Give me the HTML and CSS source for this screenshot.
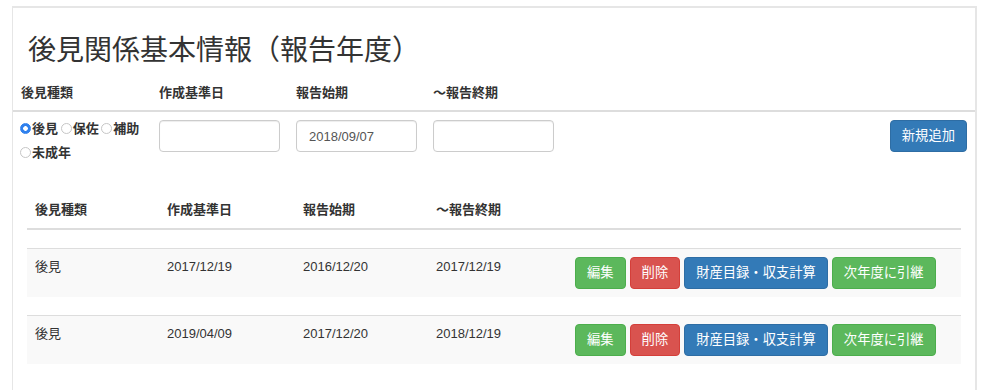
FILE: index.html
```html
<!DOCTYPE html>
<html lang="ja">
<head>
    <meta charset="UTF-8">
    <meta name="viewport" content="width=device-width, initial-scale=1.0">
    <title>後見関係基本情報（報告年度）</title>
    <link rel="stylesheet" href="styles.css">
</head>
<body>
    <div class="panel">
        <h2 class="panel-title">後見関係基本情報（報告年度）</h2>

        <div class="filter-labels">
            <div class="col">後見種類</div>
            <div class="col">作成基準日</div>
            <div class="col">報告始期</div>
            <div class="col">～報告終期</div>
        </div>

        <div class="filter-row">
            <div class="col radios">
                <label class="radio"><input type="radio" name="kind" checked>後見</label>
                <label class="radio"><input type="radio" name="kind">保佐</label>
                <label class="radio"><input type="radio" name="kind">補助</label>
                <label class="radio"><input type="radio" name="kind">未成年</label>
            </div>
            <div class="col"><input class="text-input" type="text"></div>
            <div class="col"><input class="text-input" type="text" value="2018/09/07"></div>
            <div class="col"><input class="text-input" type="text"></div>
            <div class="col col-action">
                <button class="btn btn-primary">新規追加</button>
            </div>
        </div>

        <div class="report-table">
            <div class="table-head">
                <div class="cell">後見種類</div>
                <div class="cell">作成基準日</div>
                <div class="cell">報告始期</div>
                <div class="cell">～報告終期</div>
                <div class="cell"></div>
            </div>

            <div class="table-spacer"></div>
            <div class="table-row">
                <div class="cell">後見</div>
                <div class="cell">2017/12/19</div>
                <div class="cell">2016/12/20</div>
                <div class="cell">2017/12/19</div>
                <div class="cell actions">
                    <button class="btn btn-success">編集</button>
                    <button class="btn btn-danger">削除</button>
                    <button class="btn btn-primary">財産目録・収支計算</button>
                    <button class="btn btn-success">次年度に引継</button>
                </div>
            </div>

            <div class="table-spacer"></div>
            <div class="table-row">
                <div class="cell">後見</div>
                <div class="cell">2019/04/09</div>
                <div class="cell">2017/12/20</div>
                <div class="cell">2018/12/19</div>
                <div class="cell actions">
                    <button class="btn btn-success">編集</button>
                    <button class="btn btn-danger">削除</button>
                    <button class="btn btn-primary">財産目録・収支計算</button>
                    <button class="btn btn-success">次年度に引継</button>
                </div>
            </div>
        </div>
    </div>
</body>
</html>
```

FILE: styles.css
```css
* {
    margin: 0;
    padding: 0;
    box-sizing: border-box;
}

body {
    font-family: "Liberation Sans", "Noto Sans CJK JP", sans-serif;
    font-size: 13px;
    line-height: 20px;
    color: #333;
    background-color: #fff;
}

.panel {
    width: 965px;
    margin: 6px 0 0 12px;
    border: 1px solid #e6e6e6;
    border-top-width: 2px;
    border-right-width: 2px;
    padding-bottom: 60px;
}

.panel-title {
    font-size: 28px;
    line-height: 30px;
    font-weight: 400;
    padding: 28px 0 0 15px;
}

/* search form */
.filter-labels,
.filter-row {
    display: grid;
    grid-template-columns: 138px 137px 137px 137px 1fr;
}

.filter-labels {
    margin-top: 17px;
    padding-bottom: 7px;
    border-bottom: 2px solid #ddd;
    font-weight: bold;
}

.col {
    padding: 0 8px;
}

.filter-row {
    padding-top: 8px;
    align-items: start;
}

.radios {
    margin-top: -3px;
    line-height: 24px;
    font-weight: bold;
}

.radio {
    display: inline-block;
    cursor: pointer;
}

.radio input {
    appearance: none;
    -webkit-appearance: none;
    width: 11px;
    height: 11px;
    margin: 0 1px 0 -1px;
    border: 1px solid #c6c6c6;
    border-radius: 50%;
    background: #fff;
    vertical-align: -1px;
}

.radio input:checked {
    border-color: #2f80ed;
    background: radial-gradient(circle, #fff 0 2px, #2f80ed 2.6px);
}

.text-input {
    display: block;
    width: 100%;
    height: 32px;
    padding: 6px 12px;
    border: 1px solid #ccc;
    border-radius: 4px;
    font: inherit;
    color: #555;
    box-shadow: inset 0 1px 1px rgba(0, 0, 0, 0.075);
}

.col-action {
    display: flex;
    justify-content: flex-end;
}

/* buttons */
.btn {
    display: inline-block;
    padding: 6px 11px;
    font-family: inherit;
    font-size: 13.3px;
    line-height: 18px;
    color: #fff;
    border: 1px solid transparent;
    border-radius: 4px;
    cursor: pointer;
}

.btn-primary {
    background-color: #337ab7;
    border-color: #2e6da4;
}

.btn-success {
    background-color: #5cb85c;
    border-color: #4cae4c;
}

.btn-danger {
    background-color: #d9534f;
    border-color: #d43f3a;
}

/* report list */
.report-table {
    margin: 27px 14px 0 14px;
}

.table-head,
.table-row {
    display: grid;
    grid-template-columns: 132px 136px 133px 139px 1fr;
}

.table-head {
    font-weight: bold;
    border-bottom: 2px solid #ddd;
}

.cell {
    padding: 8px;
}

.table-spacer {
    height: 18px;
}

.table-row {
    border-top: 1px solid #ddd;
    background-color: #f9f9f9;
}

.actions {
    display: flex;
    gap: 4px;
}
```
